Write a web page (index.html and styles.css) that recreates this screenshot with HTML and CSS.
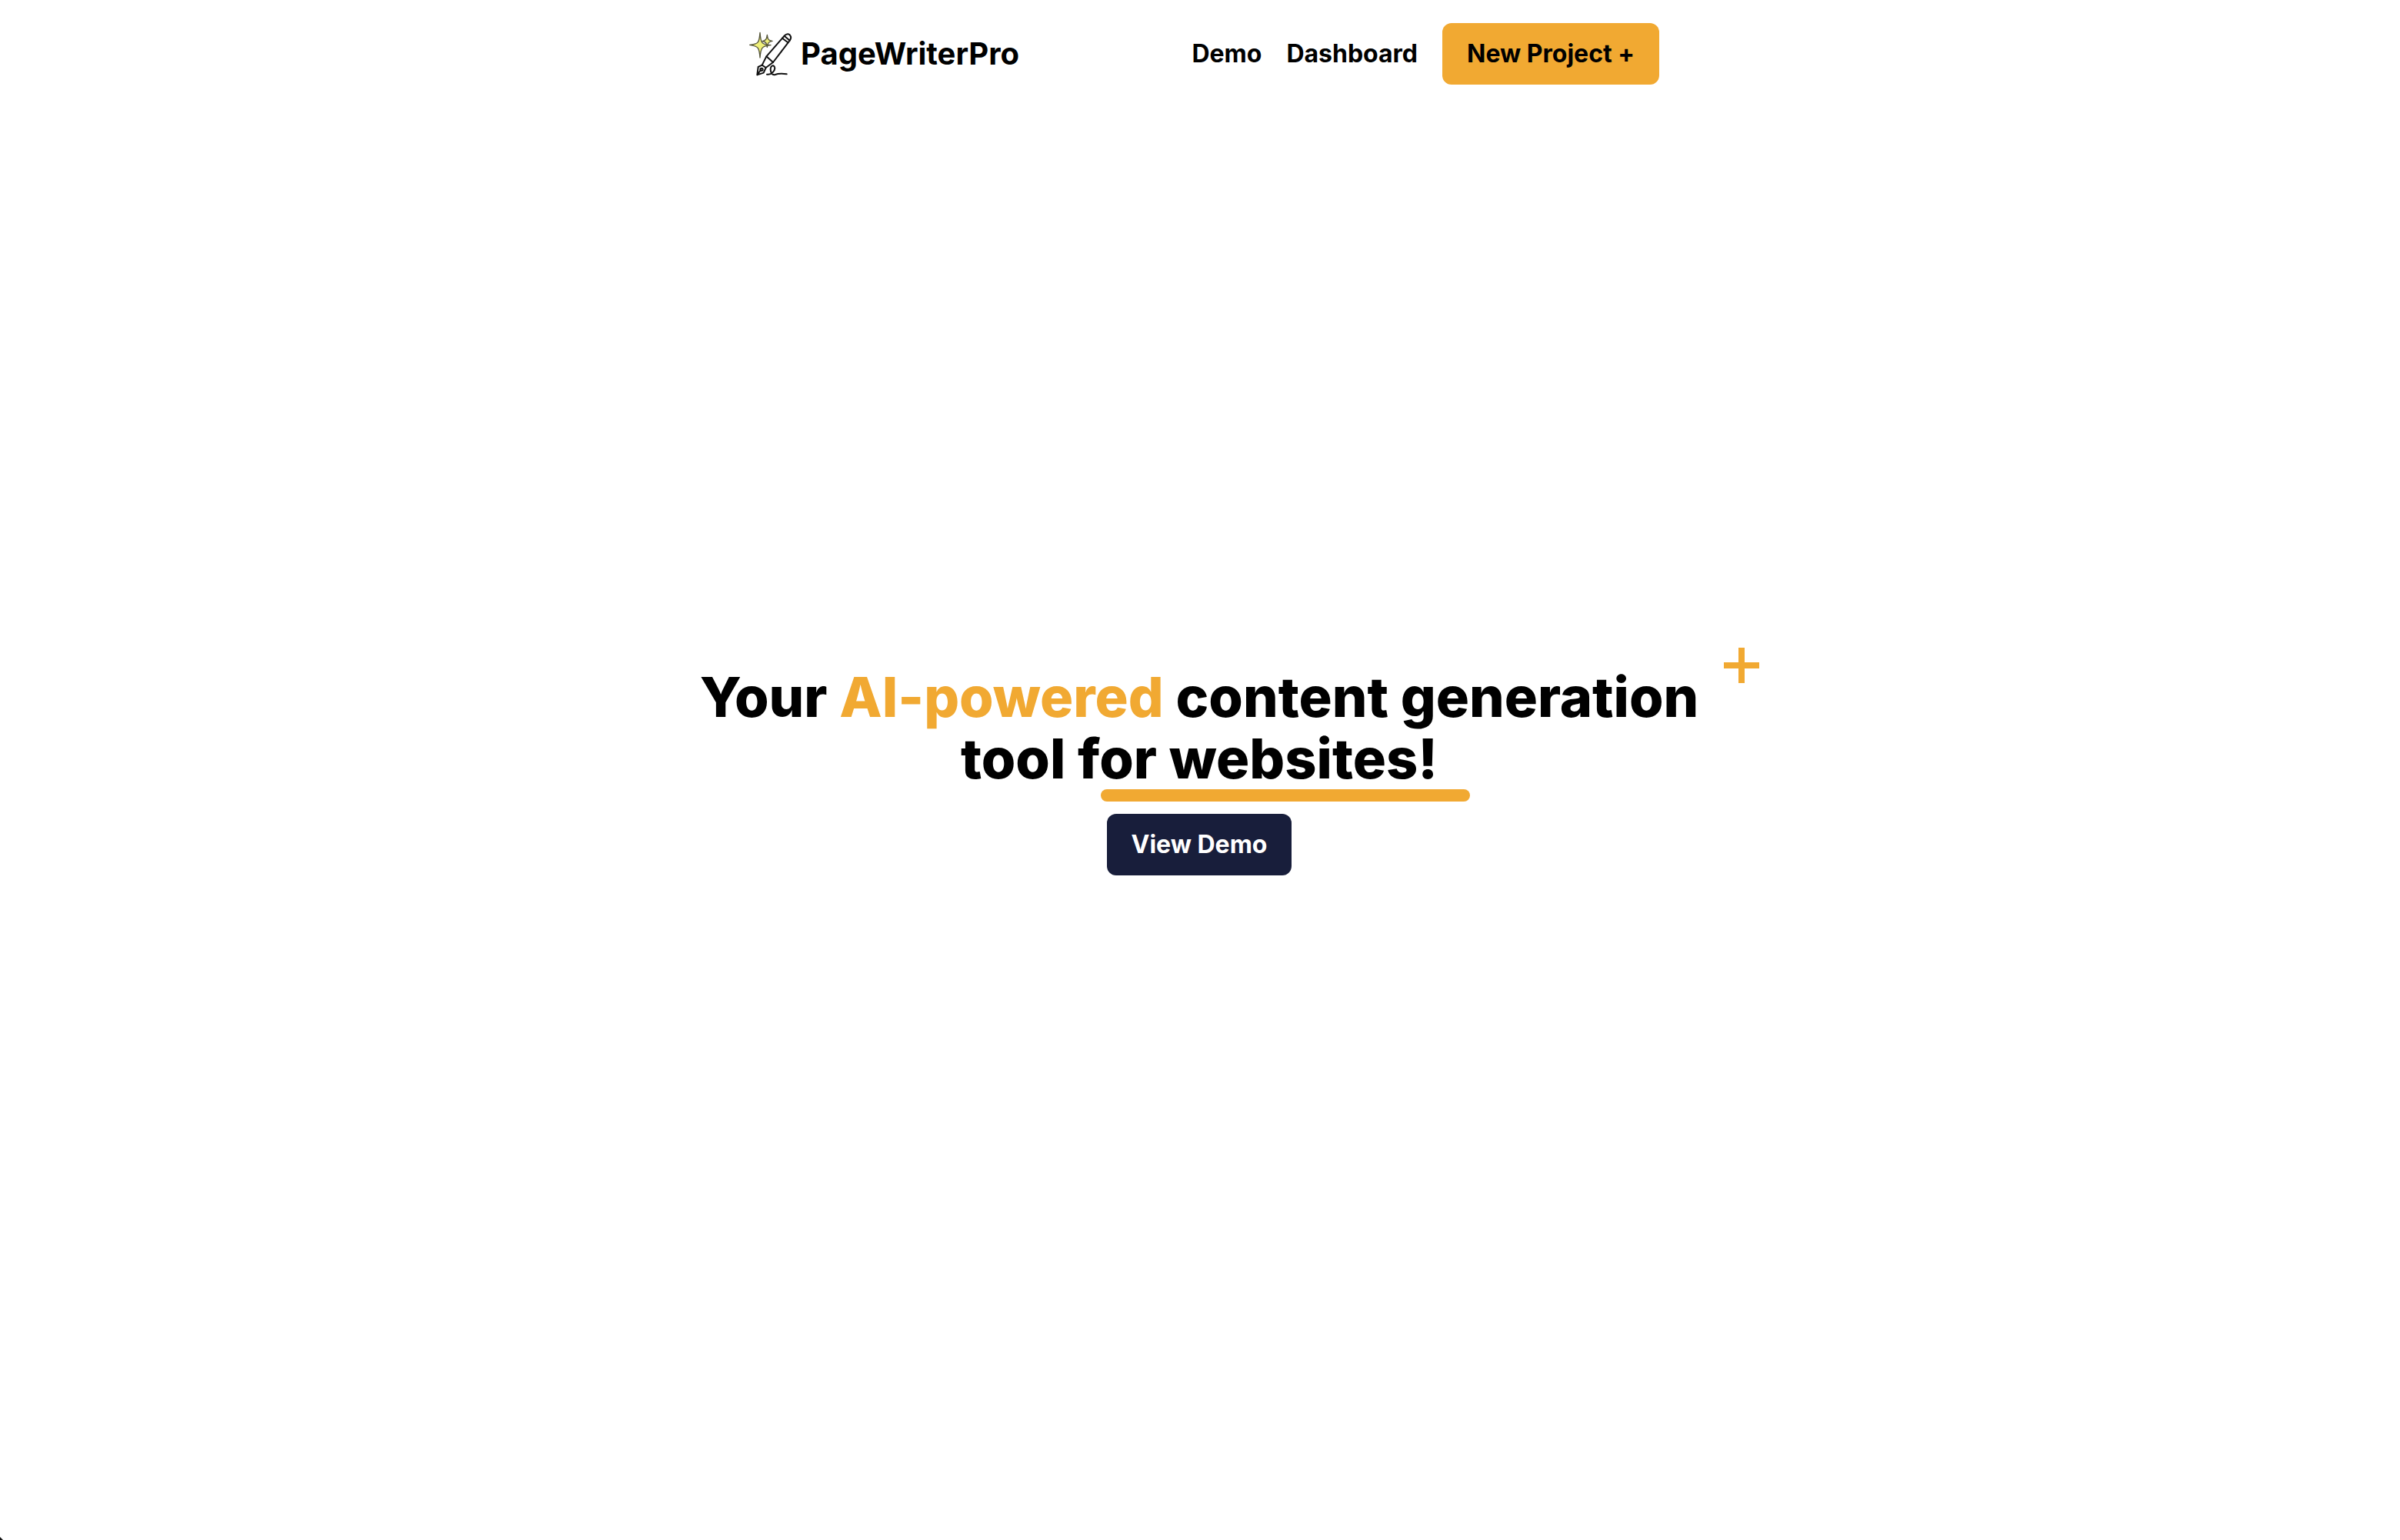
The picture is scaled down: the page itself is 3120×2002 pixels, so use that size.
FILE: index.html
```html
<!DOCTYPE html>
<html lang="en">
<head>
  <meta charset="utf-8">
  <meta name="viewport" content="width=device-width, initial-scale=1">
  <title>PageWriterPro</title>
  <link rel="stylesheet" href="styles.css">
</head>
<body>
  <header class="site-header">
    <a class="brand" href="#">
      <svg class="brand-icon" viewBox="0 0 240 240" fill="none" stroke="#111" stroke-width="6" stroke-linecap="round" stroke-linejoin="round" aria-hidden="true">
        <g fill="#eff07a" stroke="#55553a" stroke-width="4">
          <path d="M81 37C84 80 88 84 123 86C88 89 84 96 81 135C78 96 75 90 41 85C75 82 78 76 81 37Z"/>
          <path d="M109 46C111 64 114 68 129 70C115 73 111 77 109 94C107 78 104 73 90 71C104 68 107 63 109 46Z"/>
        </g>
        <path d="M106 130L176 50Q187 38 197 46Q206 56 197 68L132 153L104 174L89 164Z"/>
        <path d="M106 130L132 153M168 59L190 76M176 50L197 68"/>
        <path d="M89 164L74 171L70 202L95 194L104 174M70 202L84 183"/>
        <circle cx="87" cy="181" r="5"/>
        <path d="M108 200C126 204 142 183 138 172C134 160 121 168 122 181C123 194 128 204 140 201C153 196 163 196 185 199"/>
      </svg>
      <span>PageWriterPro</span>
    </a>
    <nav class="site-nav">
      <a href="#">Demo</a>
      <a href="#">Dashboard</a>
      <button class="button button-accent" type="button">New Project +</button>
    </nav>
  </header>
  <main class="hero">
    <div class="hero-heading">
      <h1>Your <span class="accent">AI-powered</span> content generation tool for websites!</h1>
      <span class="underline"></span>
      <svg class="plus" viewBox="0 0 46 46" fill="currentColor" aria-hidden="true"><path d="M19 0h8v19h19v8H27v19h-8V27H0v-8h19z"/></svg>
    </div>
    <button class="button button-dark" type="button">View Demo</button>
  </main>
</body>
</html>
```
FILE: styles.css
```css
:root {
  --accent: #f1a932;
  --navy: #181e3b;
}

* {
  box-sizing: border-box;
}

body {
  position: relative;
  display: flex;
  flex-direction: column;
  min-height: 100vh;
  margin: 0;
  padding-right: 2px;
  background: #fff;
  color: #000;
  font-family: Inter, "Liberation Sans", sans-serif;
  font-size: 32px;
  font-weight: 700;
  line-height: 48px;
}

/* dark notch in the rounded bottom-left window corner */
body::after {
  content: "";
  position: absolute;
  left: 0;
  bottom: 0;
  width: 4px;
  height: 4px;
  background: #111;
  clip-path: polygon(0 0, 100% 100%, 0 100%);
}

a {
  color: inherit;
  text-decoration: none;
}

.site-header {
  display: flex;
  align-items: center;
  justify-content: space-between;
  width: 100%;
  max-width: 1196px;
  height: 140px;
  margin: 0 auto;
}

.brand {
  display: flex;
  align-items: center;
  font-size: 40px;
}

.brand-icon {
  width: 80px;
  height: 80px;
}

.site-nav {
  display: flex;
  align-items: center;
  gap: 32px;
}

.button {
  padding: 16px 32px;
  border: 0;
  border-radius: 12px;
  font: inherit;
  cursor: pointer;
}

.button-accent {
  background: var(--accent);
  color: #000;
}

.button-dark {
  background: var(--navy);
  color: #fff;
}

.hero {
  display: flex;
  flex: 1;
  flex-direction: column;
  align-items: center;
  justify-content: center;
  gap: 32px;
  padding-bottom: 138px;
}

.hero-heading {
  position: relative;
  max-width: 1344px;
}

h1 {
  margin: 0;
  font-size: 72px;
  font-weight: 800;
  line-height: 80px;
  text-align: center;
}

.accent {
  color: var(--accent);
}

.underline {
  position: absolute;
  top: 100%;
  right: 320px;
  width: 480px;
  height: 16px;
  border-radius: 8px;
  background: var(--accent);
}

.plus {
  position: absolute;
  top: -24px;
  right: -56px;
  width: 46px;
  height: 46px;
  color: var(--accent);
}
```
